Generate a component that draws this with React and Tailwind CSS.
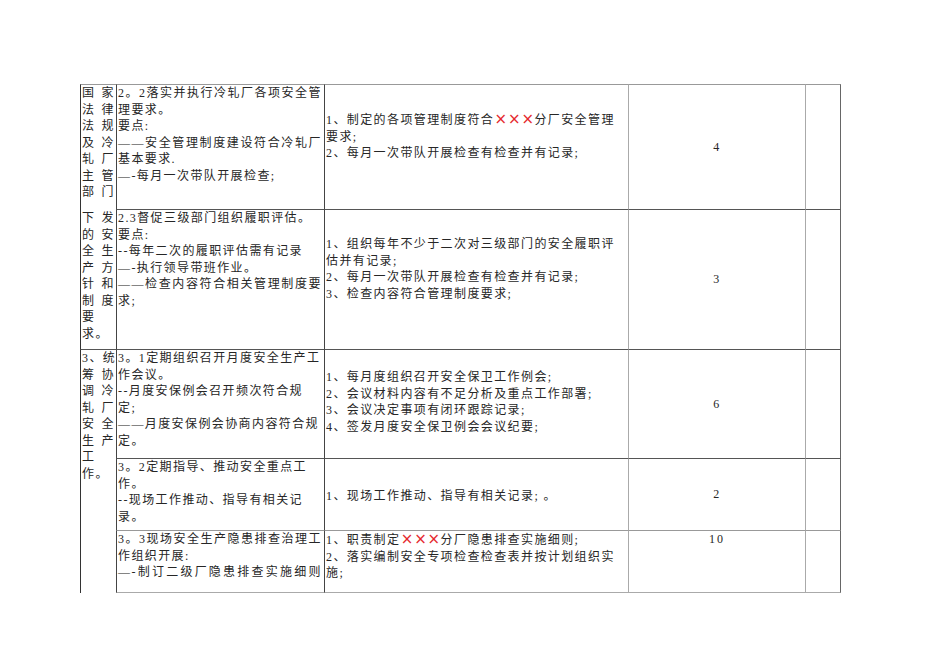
import React from "react";

const Pair = ({ a, b }) => (
  <div className="flex justify-between whitespace-nowrap">
    <span>{a}</span>
    <span>{b}</span>
  </div>
);

const L = ({ children }) => <div className="whitespace-nowrap">{children}</div>;
const J = ({ children }) => (
  <div className="whitespace-nowrap [text-align-last:justify]">{children}</div>
);

const X = () => (
  <span className="inline-block w-[13.4px] text-center text-[#e5282d] font-['DejaVu_Sans',sans-serif] text-[15px] leading-[16.5px] tracking-normal">
    ×
  </span>
);

export default function App() {
  return (
    <div className="min-h-[672px] w-[950px] bg-white pt-[84px] pl-[80px] text-[12px] leading-[16.5px] tracking-[1.4px] text-[#262626] font-['Liberation_Serif','Noto_Sans_CJK_SC',serif]">
      <div className="grid w-[761px] grid-cols-[36px_208px_304px_177px_36px] grid-rows-[125px_140px_109px_72px_63px]">
        {/* ===== Column 1 ===== */}
        <div className="col-start-1 row-start-1 border-l border-t border-l-[#333] border-t-[#999] pl-px pr-px">
          <Pair a="国" b="家" />
          <Pair a="法" b="律" />
          <Pair a="法" b="规" />
          <Pair a="及" b="冷" />
          <Pair a="轧" b="厂" />
          <Pair a="主" b="管" />
          <Pair a="部" b="门" />
        </div>
        <div className="col-start-1 row-start-2 border-l border-l-[#333] pt-px pl-px pr-px">
          <Pair a="下" b="发" />
          <Pair a="的" b="安" />
          <Pair a="全" b="生" />
          <Pair a="产" b="方" />
          <Pair a="针" b="和" />
          <Pair a="制" b="度" />
          <L>要</L>
          <L>求。</L>
        </div>
        <div className="col-start-1 row-start-3 row-span-3 border-l border-t border-l-[#333] border-t-[#555] pl-px pr-px">
          <Pair a="3、" b="统" />
          <Pair a="筹" b="协" />
          <Pair a="调" b="冷" />
          <Pair a="轧" b="厂" />
          <Pair a="安" b="全" />
          <Pair a="生" b="产" />
          <L>工</L>
          <L>作。</L>
        </div>

        {/* ===== Row 1 ===== */}
        <div className="col-start-2 row-start-1 border-l border-t border-l-[#444] border-t-[#999] pl-px pr-[2px]">
          <J>2。2落实并执行冷轧厂各项安全管</J>
          <L>理要求。</L>
          <L>要点:</L>
          <J>——安全管理制度建设符合冷轧厂</J>
          <L>基本要求.</L>
          <L>—-每月一次带队开展检查;</L>
        </div>
        <div className="col-start-3 row-start-1 flex flex-col justify-center border-l border-t border-l-[#444] border-t-[#999] pl-px pb-[21px]">
          <L>
            1、制定的各项管理制度符合<X />
            <X />
            <X />分厂安全管理
          </L>
          <L>要求;</L>
          <L>2、每月一次带队开展检查有检查并有记录;</L>
        </div>
        <div className="col-start-4 row-start-1 flex items-center justify-center border-l border-t border-l-[#aaa] border-t-[#999]">
          4
        </div>
        <div className="col-start-5 row-start-1 border-l border-r border-t border-l-[#aaa] border-r-[#666] border-t-[#999]" />

        {/* ===== Row 2 ===== */}
        <div className="col-start-2 row-start-2 border-l border-t border-l-[#444] border-t-[#555] pl-px pr-[2px]">
          <L>2.3督促三级部门组织履职评估。</L>
          <L>要点:</L>
          <L>--每年二次的履职评估需有记录</L>
          <L>—-执行领导带班作业。</L>
          <J>——检查内容符合相关管理制度要</J>
          <L>求;</L>
        </div>
        <div className="col-start-3 row-start-2 flex flex-col justify-center border-l border-t border-l-[#444] border-t-[#555] pl-px pb-[21px]">
          <L>1、组织每年不少于二次对三级部门的安全履职评</L>
          <L>估并有记录;</L>
          <L>2、每月一次带队开展检查有检查并有记录;</L>
          <L>3、检查内容符合管理制度要求;</L>
        </div>
        <div className="col-start-4 row-start-2 flex items-center justify-center border-l border-t border-l-[#aaa] border-t-[#555]">
          3
        </div>
        <div className="col-start-5 row-start-2 border-l border-r border-t border-l-[#aaa] border-r-[#666] border-t-[#555]" />

        {/* ===== Row 3 ===== */}
        <div className="col-start-2 row-start-3 border-l border-t border-l-[#444] border-t-[#555] pl-px pr-[2px]">
          <L>3。1定期组织召开月度安全生产工</L>
          <L>作会议。</L>
          <L>--月度安保例会召开频次符合规</L>
          <L>定;</L>
          <L>——月度安保例会协商内容符合规</L>
          <L>定。</L>
        </div>
        <div className="col-start-3 row-start-3 flex flex-col justify-center border-l border-t border-l-[#444] border-t-[#555] pl-px pb-[4px]">
          <L>1、每月度组织召开安全保卫工作例会;</L>
          <L>2、会议材料内容有不足分析及重点工作部署;</L>
          <L>3、会议决定事项有闭环跟踪记录;</L>
          <L>4、签发月度安全保卫例会会议纪要;</L>
        </div>
        <div className="col-start-4 row-start-3 flex items-center justify-center border-l border-t border-l-[#aaa] border-t-[#555]">
          6
        </div>
        <div className="col-start-5 row-start-3 border-l border-r border-t border-l-[#aaa] border-r-[#666] border-t-[#555]" />

        {/* ===== Row 4 ===== */}
        <div className="col-start-2 row-start-4 border-l border-t border-l-[#444] border-t-[#555] pl-px pr-[2px]">
          <L>3。2定期指导、推动安全重点工</L>
          <L>作。</L>
          <L>--现场工作推动、指导有相关记</L>
          <L>录。</L>
        </div>
        <div className="col-start-3 row-start-4 flex flex-col justify-center border-l border-t border-l-[#444] border-t-[#555] pl-px pt-[4px]">
          <L>1、现场工作推动、指导有相关记录; 。</L>
        </div>
        <div className="col-start-4 row-start-4 flex items-center justify-center border-l border-t border-l-[#aaa] border-t-[#555]">
          2
        </div>
        <div className="col-start-5 row-start-4 border-l border-r border-t border-l-[#aaa] border-r-[#666] border-t-[#555]" />

        {/* ===== Row 5 ===== */}
        <div className="col-start-2 row-start-5 border-l border-t border-b border-l-[#444] border-t-[#999] border-b-[#aaa] pl-px pr-[2px]">
          <J>3。3现场安全生产隐患排查治理工</J>
          <L>作组织开展:</L>
          <J>—-制订二级厂隐患排查实施细则</J>
        </div>
        <div className="col-start-3 row-start-5 border-l border-t border-b border-l-[#444] border-t-[#999] border-b-[#aaa] pl-px">
          <L>
            1、职责制定<X />
            <X />
            <X />分厂隐患排查实施细则;
          </L>
          <L>2、落实编制安全专项检查检查表并按计划组织实</L>
          <L>施;</L>
        </div>
        <div className="col-start-4 row-start-5 border-l border-t border-b border-l-[#aaa] border-t-[#999] border-b-[#aaa] text-center">
          <span className="tracking-[2px]">10</span>
        </div>
        <div className="col-start-5 row-start-5 border-l border-r border-t border-b border-l-[#aaa] border-r-[#666] border-t-[#999] border-b-[#aaa]" />
      </div>
    </div>
  );
}
